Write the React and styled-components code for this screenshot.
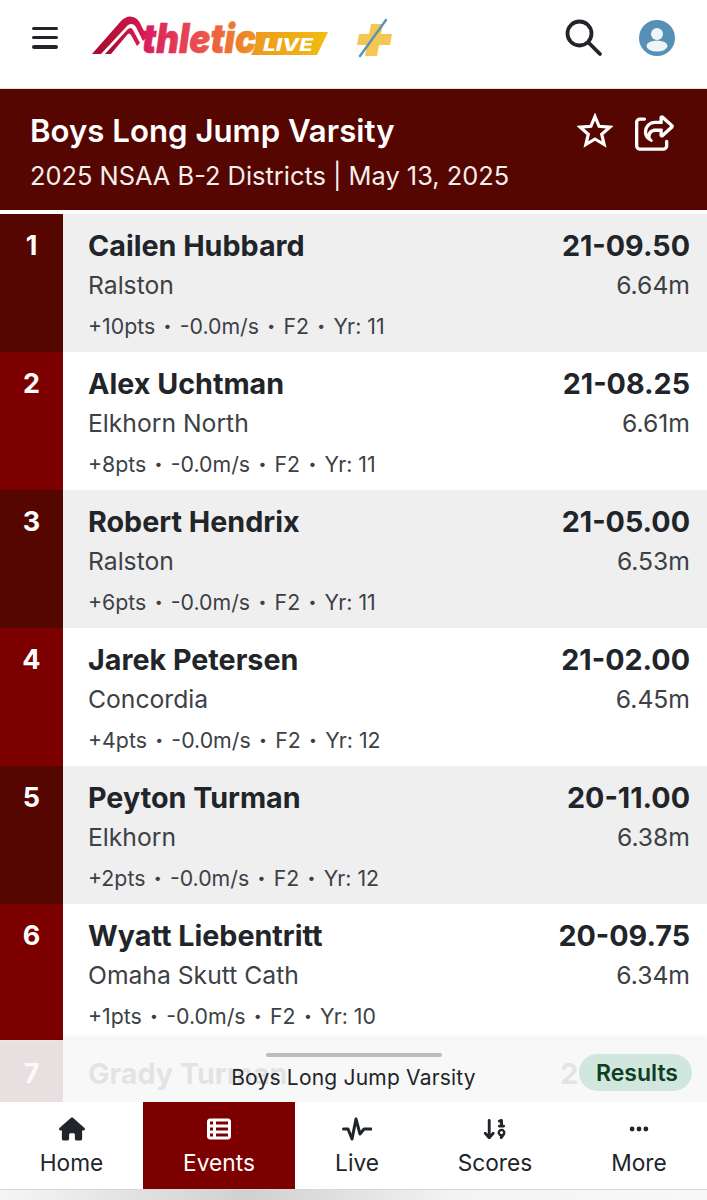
import React from "react";
import styled, { createGlobalStyle } from "styled-components";
import { FaHouse, FaTableList, FaArrowDown19, FaEllipsis, FaRegShareFromSquare } from "react-icons/fa6";

const results = [
  { name: "Cailen Hubbard", school: "Ralston", pts: "+10pts", wind: "-0.0m/s", yr: 11, mark: "21-09.50", metric: "6.64m" },
  { name: "Alex Uchtman", school: "Elkhorn North", pts: "+8pts", wind: "-0.0m/s", yr: 11, mark: "21-08.25", metric: "6.61m" },
  { name: "Robert Hendrix", school: "Ralston", pts: "+6pts", wind: "-0.0m/s", yr: 11, mark: "21-05.00", metric: "6.53m" },
  { name: "Jarek Petersen", school: "Concordia", pts: "+4pts", wind: "-0.0m/s", yr: 12, mark: "21-02.00", metric: "6.45m" },
  { name: "Peyton Turman", school: "Elkhorn", pts: "+2pts", wind: "-0.0m/s", yr: 12, mark: "20-11.00", metric: "6.38m" },
  { name: "Wyatt Liebentritt", school: "Omaha Skutt Cath", pts: "+1pts", wind: "-0.0m/s", yr: 10, mark: "20-09.75", metric: "6.34m" },
  { name: "Grady Turman", school: "Elkhorn", pts: "", wind: "-0.0m/s", yr: 11, mark: "20-07.50", metric: "6.32m" },
];

const GlobalStyle = createGlobalStyle`
  html, body {
    margin: 0;
    padding: 0;
    background: #fff;
  }
  * {
    box-sizing: border-box;
  }
`;

const Page = styled.div`
  position: relative;
  width: 707px;
  height: 1200px;
  overflow: hidden;
  display: flex;
  flex-direction: column;
  font-family: Inter, "Liberation Sans", sans-serif;
  color: #212529;
  background: #fff;
`;

const TopBar = styled.header`
  height: 89px;
  flex: none;
  display: flex;
  align-items: center;
  padding: 0 32px 13px 32px;
  border-bottom: 1px solid #e6d9d9;
`;

const MenuButton = styled.div`
  width: 26px;
  height: 22px;
  display: flex;
  flex-direction: column;
  justify-content: space-between;
  margin-right: 33px;
  span {
    height: 3.5px;
    background: #212529;
    border-radius: 2px;
  }
`;

const TopActions = styled.div`
  margin-left: auto;
  display: flex;
  align-items: center;
  gap: 36px;
`;

const EventHeader = styled.section`
  height: 121px;
  flex: none;
  background: #560600;
  color: #fff;
  padding: 24px 30px 0;
  display: flex;
  justify-content: space-between;
`;

const EventTitle = styled.h1`
  margin: 0;
  font-size: 31.2px;
  line-height: 36px;
  font-weight: 600;
`;

const EventMeta = styled.p`
  margin: 12px 0 0;
  font-size: 25.4px;
  line-height: 30px;
  font-weight: 400;
  color: #f4eeee;
`;

const EventActions = styled.div`
  display: flex;
  gap: 22px;
  height: 44px;
  align-items: flex-start;
  margin-right: 2px;
`;

const ResultList = styled.ul`
  list-style: none;
  margin: 4px 0 0;
  padding: 0;
`;

const Row = styled.li`
  display: flex;
  height: 138px;
  background: ${(p) => (p.$odd ? "#efefef" : "#fff")};
`;

const Place = styled.div`
  width: 63px;
  flex: none;
  background: ${(p) => (p.$odd ? "#560600" : "#7c0000")};
  color: #fff;
  text-align: center;
  font-size: 27px;
  line-height: 32px;
  font-weight: 700;
  padding-top: 16px;
`;

const Athlete = styled.div`
  flex: 1;
  padding: 15px 0 0 25px;
`;

const Name = styled.div`
  font-size: 28.7px;
  line-height: 34px;
  font-weight: 700;
`;

const School = styled.div`
  margin-top: 7px;
  font-size: 24.7px;
  line-height: 30px;
  color: #3c4146;
`;

const Details = styled.div`
  margin-top: 13px;
  font-size: 21.3px;
  line-height: 26px;
  color: #3c4146;
  display: flex;
  align-items: center;
  gap: 8.3px;
`;

const Dot = styled.span`
  font-size: 14px;
`;

const Mark = styled.div`
  padding: 15px 17px 0 0;
  text-align: right;
`;

const MarkValue = styled.div`
  font-size: 28.7px;
  line-height: 34px;
  font-weight: 700;
`;

const MarkMetric = styled.div`
  margin-top: 7px;
  font-size: 24.7px;
  line-height: 30px;
  color: #3c4146;
`;

const Sheet = styled.div`
  position: absolute;
  left: 0;
  right: 0;
  top: 1040px;
  height: 62px;
  background: rgba(248, 248, 248, 0.9);
  box-shadow: 0 -3px 6px rgba(0, 0, 0, 0.05);
  text-align: center;
`;

const SheetHandle = styled.div`
  width: 176px;
  height: 4px;
  margin: 13px auto 0;
  background: #bcbcbc;
  border-radius: 2px;
`;

const SheetTitle = styled.div`
  margin-top: 8px;
  font-size: 21px;
  line-height: 26px;
  letter-spacing: 0.2px;
  color: #212529;
`;

const ResultsPill = styled.div`
  position: absolute;
  right: 15px;
  top: 14px;
  height: 37px;
  padding: 0 14px 0 17px;
  display: flex;
  align-items: center;
  background: #d1e7dd;
  border-radius: 19px;
  color: #0f3d26;
  font-size: 23px;
  font-weight: 600;
`;

const BottomNav = styled.nav`
  position: absolute;
  left: 0;
  right: 0;
  top: 1102px;
  height: 88px;
  background: #fff;
  border-bottom: 1px solid #d8d8d8;
  display: grid;
  grid-template-columns: 143px 152px 124px 152px 136px;
`;

const NavItem = styled.div`
  display: flex;
  flex-direction: column;
  align-items: center;
  padding-top: 13px;
  background: ${(p) => (p.$active ? "#7c0000" : "transparent")};
  color: ${(p) => (p.$active ? "#fff" : "#212529")};
`;

const NavIcon = styled.div`
  height: 28px;
  display: flex;
  align-items: center;
  justify-content: center;
`;

const NavLabel = styled.div`
  margin-top: 5px;
  font-size: 22.7px;
  line-height: 30px;
`;

const HomeBar = styled.div`
  position: absolute;
  left: 0;
  right: 0;
  top: 1190px;
  height: 10px;
  background: linear-gradient(90deg, #f6f6f6 0%, #d0d0d0 35%, #f4f4f4 65%, #f8f8f8 100%);
`;

function Logo() {
  return (
    <svg width="240" height="46" viewBox="0 0 240 46">
      <defs>
        <linearGradient id="logoGrad" x1="0" x2="1" y1="0" y2="0">
          <stop offset="0" stopColor="#d81a60" />
          <stop offset="0.5" stopColor="#ea4f4f" />
          <stop offset="1" stopColor="#ee961e" />
        </linearGradient>
        <linearGradient id="arcGrad" x1="0" x2="1" y1="0" y2="0">
          <stop offset="0" stopColor="#a30c2c" />
          <stop offset="1" stopColor="#d81a52" />
        </linearGradient>
        <linearGradient id="bandGrad" x1="0" x2="1" y1="0" y2="0">
          <stop offset="0" stopColor="#ec981c" />
          <stop offset="1" stopColor="#f2bd10" />
        </linearGradient>
      </defs>
      <path d="M1 39 L30 6 Q36 0 42 2 Q47 3 50 10 L56 22 L52 26 L45 12 Q42 7 37 10 L10 39 Z" fill="url(#arcGrad)" />
      <path d="M14 39 L36 15 Q40 11 42 15 L49 28 L46 31 L40 20 Q38 17 36 20 L20 39 Z" fill="url(#arcGrad)" />
      <path d="M165 17 H237 L226 40 H160 Q166 30 165 17 Z" fill="url(#bandGrad)" />
      <text x="172" y="36" fontFamily="Inter, sans-serif" fontSize="18" fontWeight="800" fontStyle="italic" fill="#fff" textLength="50" lengthAdjust="spacingAndGlyphs">LIVE</text>
      <text x="51" y="38" fontFamily="Inter, sans-serif" fontSize="41" fontWeight="900" fontStyle="italic" fill="url(#logoGrad)" stroke="url(#logoGrad)" strokeWidth="0.6" textLength="114" lengthAdjust="spacingAndGlyphs">thletic</text>
    </svg>
  );
}

function PlusMark() {
  return (
    <svg width="40" height="40" viewBox="0 0 40 40" style={{ marginLeft: 25, marginTop: 2 }}>
      <path d="M15 5 H27 L25 15 H36 L34 26 H23 L21 37 H9 L11 26 H1 L3 15 H13 Z" fill="#f4c653" />
      <path d="M30 1 L4 37" stroke="#5a93b8" strokeWidth="2.4" strokeLinecap="round" />
    </svg>
  );
}

function SearchIcon() {
  return (
    <svg width="38" height="38" viewBox="0 0 38 38" fill="none" stroke="#212529" strokeWidth="3.8" strokeLinecap="round">
      <circle cx="14.5" cy="14.5" r="12" />
      <path d="M23.5 23.5 L35 35" />
    </svg>
  );
}

function UserIcon() {
  return (
    <svg width="36" height="36" viewBox="0 0 36 36">
      <circle cx="18" cy="18" r="18" fill="#5590b6" />
      <circle cx="18" cy="14" r="6" fill="#f0f4f6" />
      <ellipse cx="18" cy="26" rx="10.5" ry="5.5" fill="#f0f4f6" />
    </svg>
  );
}

function StarIcon() {
  return (
    <svg width="36" height="36" viewBox="0 0 36 36" fill="none" stroke="currentColor" strokeWidth="3.2" strokeLinejoin="miter">
      <path d="M18 3.5 L22.1 13.3 L32.7 14.2 L24.7 21.2 L27.1 31.5 L18 26 L8.9 31.5 L11.3 21.2 L3.3 14.2 L13.9 13.3 Z" />
    </svg>
  );
}

function PulseIcon() {
  return (
    <svg width="30" height="26" viewBox="0 0 30 24" fill="none" stroke="currentColor" strokeWidth="3" strokeLinejoin="round" strokeLinecap="round">
      <path d="M1.5 12 H6 L10 22 L14 2 L18 17 L22 12 H29" />
    </svg>
  );
}

const navItems = [
  { label: "Home", icon: <FaHouse size={26} /> },
  { label: "Events", icon: <FaTableList size={24} />, active: true },
  { label: "Live", icon: <PulseIcon /> },
  { label: "Scores", icon: <FaArrowDown19 size={26} /> },
  { label: "More", icon: <FaEllipsis size={22} /> },
];

export default function App() {
  return (
    <Page>
      <GlobalStyle />
      <TopBar>
        <MenuButton>
          <span />
          <span />
          <span />
        </MenuButton>
        <Logo />
        <PlusMark />
        <TopActions>
          <SearchIcon />
          <UserIcon />
        </TopActions>
      </TopBar>
      <EventHeader>
        <div>
          <EventTitle>Boys Long Jump Varsity</EventTitle>
          <EventMeta>2025 NSAA B-2 Districts | May 13, 2025</EventMeta>
        </div>
        <EventActions>
          <StarIcon />
          <FaRegShareFromSquare size={40} />
        </EventActions>
      </EventHeader>
      <ResultList>
        {results.map((r, i) => (
          <Row key={r.name} $odd={i % 2 === 0}>
            <Place $odd={i % 2 === 0}>{i + 1}</Place>
            <Athlete>
              <Name>{r.name}</Name>
              <School>{r.school}</School>
              <Details>
                <span>{r.pts}</span>
                <Dot>•</Dot>
                <span>{r.wind}</span>
                <Dot>•</Dot>
                <span>F2</span>
                <Dot>•</Dot>
                <span>Yr: {r.yr}</span>
              </Details>
            </Athlete>
            <Mark>
              <MarkValue>{r.mark}</MarkValue>
              <MarkMetric>{r.metric}</MarkMetric>
            </Mark>
          </Row>
        ))}
      </ResultList>
      <Sheet>
        <SheetHandle />
        <SheetTitle>Boys Long Jump Varsity</SheetTitle>
        <ResultsPill>Results</ResultsPill>
      </Sheet>
      <BottomNav>
        {navItems.map((n) => (
          <NavItem key={n.label} $active={n.active}>
            <NavIcon>{n.icon}</NavIcon>
            <NavLabel>{n.label}</NavLabel>
          </NavItem>
        ))}
      </BottomNav>
      <HomeBar />
    </Page>
  );
}
